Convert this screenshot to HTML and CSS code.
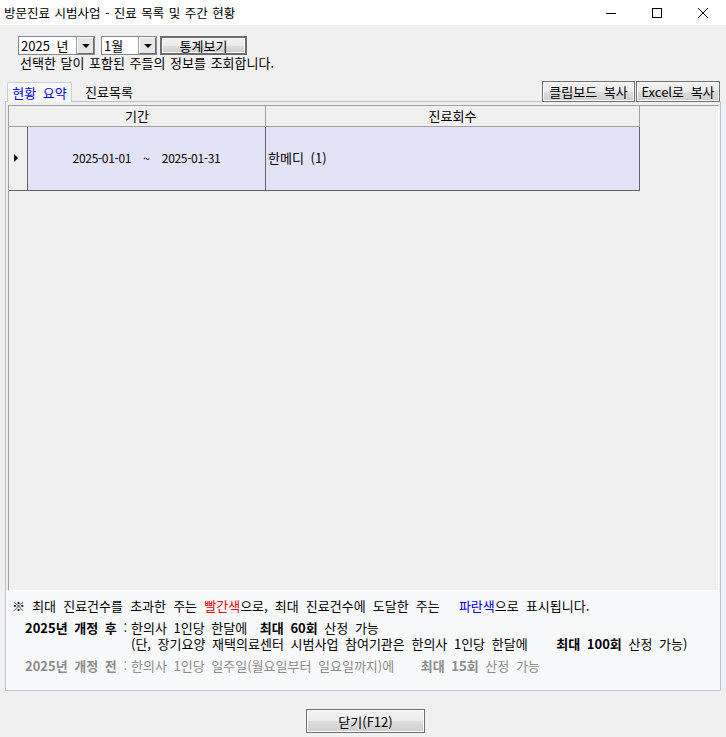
FILE: index.html
```html
<!DOCTYPE html>
<html lang="ko">
<head>
    <meta charset="UTF-8">
    <meta name="viewport" content="width=device-width, initial-scale=1.0">
    <title>방문진료 시범사업 - 진료 목록 및 주간 현황</title>
    <link rel="stylesheet" href="styles.css">
</head>
<body>

    <header class="titlebar">
        <span class="title">방문진료 시범사업 - 진료 목록 및 주간 현황</span>
        <div class="caption">
            <span class="cap-btn"><svg width="10" height="10" viewBox="0 0 10 10"><path d="M0 5.5h10" stroke="#000" stroke-width="1"/></svg></span>
            <span class="cap-btn"><svg width="10" height="10" viewBox="0 0 10 10"><rect x="0.5" y="0.5" width="9" height="9" fill="none" stroke="#000" stroke-width="1"/></svg></span>
            <span class="cap-btn"><svg width="10" height="10" viewBox="0 0 10 10"><path d="M0 0L10 10M10 0L0 10" stroke="#000" stroke-width="1"/></svg></span>
        </div>
    </header>

    <section class="toolbar">
        <div class="combo combo-year"><span class="combo-text">2025 년</span><span class="combo-arrow"></span></div>
        <div class="combo combo-month"><span class="combo-text">1월</span><span class="combo-arrow"></span></div>
        <button class="btn btn-default btn-stats">통계보기</button>
    </section>
    <p class="hint">선택한 달이 포함된 주들의 정보를 조회합니다.</p>

    <div class="tabbar">
        <div class="tabs">
            <span class="tab active">현황 요약</span>
            <span class="tab">진료목록</span>
        </div>
        <div class="actions">
            <button class="btn btn-copy">클립보드 복사</button>
            <button class="btn btn-excel">Excel로 복사</button>
        </div>
    </div>

    <section class="tabpage">
        <div class="grid">
            <div class="grid-table">
                <div class="gh gh-period">기간</div>
                <div class="gh">진료회수</div>

                <div class="rowhead"><span class="row-arrow"></span></div>
                <div class="cell cell-period">2025-01-01&nbsp;&nbsp;~&nbsp;&nbsp;2025-01-31</div>
                <div class="cell cell-count">한메디 (1)</div>
            </div>
        </div>

        <div class="notice">
            <p class="notice-head">※ 최대 진료건수를 초과한 주는 <span class="red">빨간색</span>으로, 최대 진료건수에 도달한 주는 <span class="blue">파란색</span>으로 표시됩니다.</p>
            <div class="rule">
                <span class="rule-label"><b>2025년 개정 후</b> :</span>
                <span>한의사 1인당 한달에 <b class="gap-s">최대 60회</b> 산정 가능</span>
                <span></span>
                <span>(단, 장기요양 재택의료센터 시범사업 참여기관은 한의사 1인당 한달에 <b class="gap-l">최대 100회</b> 산정 가능)</span>
            </div>
            <div class="rule rule-old">
                <span class="rule-label"><b>2025년 개정 전</b> :</span>
                <span>한의사 1인당 일주일(월요일부터 일요일까지)에 <b class="gap-m">최대 15회</b> 산정 가능</span>
            </div>
        </div>
    </section>

    <footer class="footer">
        <button class="btn btn-close">닫기(F12)</button>
    </footer>

</body>
</html>
```

FILE: styles.css
```css
body {
    margin: 0;
    width: 726px;
    height: 737px;
    overflow: hidden;
    background-color: #f0f0f0;
    font-family: "Noto Sans CJK KR", "Noto Sans", sans-serif;
    font-size: 13px;
    color: #000;
    word-spacing: 3px;
}

p {
    margin: 0;
}

/* title bar */
.titlebar {
    height: 25px;
    background-color: #fff;
    display: flex;
    align-items: center;
    justify-content: space-between;
    padding-left: 4px;
}

.title {
    line-height: 25px;
    margin-top: -1px;
    font-size: 12.5px;
    word-spacing: 1px;
}

.caption {
    display: flex;
    align-self: stretch;
}

.cap-btn {
    width: 46px;
    display: flex;
    align-items: center;
    justify-content: center;
}

/* toolbar */
.toolbar {
    display: flex;
    margin: 11px 0 0 18px;
    height: 19px;
}

.combo {
    display: flex;
    box-sizing: border-box;
    height: 19px;
    border: 1px solid #828790;
    background-color: #fff;
}

.combo-year {
    width: 77px;
}

.combo-month {
    width: 56px;
    margin-left: 6px;
}

.combo-text {
    flex: 1;
    line-height: 17px;
    padding-left: 2px;
}

.combo-arrow {
    width: 15px;
    background-color: #e6e6e6;
    border: 1px solid #fff;
    border-right-color: #6d6d6d;
    border-bottom-color: #6d6d6d;
    box-shadow: -1px 0 0 #a0a0a0;
    position: relative;
}

.combo-arrow::after {
    content: "";
    position: absolute;
    left: 4px;
    top: 6px;
    border-left: 4px solid transparent;
    border-right: 4px solid transparent;
    border-top: 4px solid #000;
}

.btn {
    font-family: inherit;
    font-size: 13px;
    word-spacing: 3px;
    color: #000;
    padding: 0;
    box-sizing: border-box;
    border: 1px solid #707070;
    background: linear-gradient(#f2f2f2 0%, #ebebeb 50%, #dddddd 51%, #cfcfcf 100%);
    box-shadow: inset 0 0 0 1px #fcfcfc;
    cursor: pointer;
}

.btn-default {
    border: 2px solid #6d6d6d;
}

.btn-stats {
    width: 87px;
    height: 19px;
    margin-left: 3px;
    line-height: 14px;
}

.hint {
    margin: 1px 0 0 20px;
    line-height: 14px;
    height: 14px;
    word-spacing: 1px;
}

/* tabs */
.tabbar {
    display: flex;
    justify-content: space-between;
    height: 20px;
    margin-top: 11px;
}

.tabs {
    display: flex;
    align-items: flex-end;
    padding-left: 7px;
}

.tab {
    width: 74px;
    height: 19px;
    line-height: 19px;
    text-align: center;
}

.tab.active {
    width: 63px;
    height: 19px;
    color: #0000ff;
    background-color: #fafafa;
    border: 1px solid #c2cfde;
    border-bottom: none;
    border-radius: 2px 2px 0 0;
    position: relative;
    z-index: 1;
    margin-bottom: -1px;
}

.actions {
    display: flex;
    margin-right: 6px;
}

.btn-copy {
    width: 93px;
    height: 21px;
}

.btn-excel {
    width: 84px;
    height: 21px;
    margin-left: 1px;
}

/* tab page */
.tabpage {
    margin: 0 5px 0 5px;
    height: 588px;
    border: 1px solid #b7c6d6;
    display: flex;
    flex-direction: column;
}

.grid {
    margin: 3px 1px 0 2px;
    height: 486px;
    box-sizing: border-box;
    border: 1px solid #a0a0a0;
    border-right-color: #fff;
    border-bottom-color: #fff;
    background-color: #f0f0f0;
}

.grid-table {
    display: grid;
    grid-template-columns: 19px 238px 374px;
    grid-template-rows: 21px 64px;
}

.gh {
    box-sizing: border-box;
    text-align: center;
    line-height: 20px;
    border-right: 1px solid #a0a0a0;
    border-bottom: 1px solid #a0a0a0;
    background-color: #f0f0f0;
}

.gh-period {
    grid-column: span 2;
}

.rowhead {
    box-sizing: border-box;
    border-right: 1px solid #646464;
    border-bottom: 1px solid #646464;
    background-color: #f0f0f0;
    position: relative;
}

.row-arrow {
    position: absolute;
    left: 5px;
    top: 27px;
    border-top: 4px solid transparent;
    border-bottom: 4px solid transparent;
    border-left: 4px solid #000;
}

.cell {
    box-sizing: border-box;
    background-color: #e3e3f8;
    border-right: 1px solid #646464;
    border-bottom: 1px solid #646464;
    line-height: 62px;
}

.cell-period {
    text-align: center;
    font-size: 12px;
    letter-spacing: -0.3px;
}

.cell-count {
    padding-left: 2px;
}

/* notice */
.notice {
    flex: 1;
    background-color: #f8f9fb;
    padding: 7px 0 0 6px;
}

.notice-head {
    line-height: 16px;
    word-spacing: 3.5px;
}

.red {
    color: #ff0000;
}

.blue {
    color: #0000ff;
    margin-left: 12px;
}

.rule {
    display: grid;
    grid-template-columns: 106px auto;
    margin: 6px 0 0 13px;
    line-height: 16px;
}

.rule-label {
    white-space: nowrap;
}

.rule-old {
    color: #8c8c8c;
}

.gap-s {
    margin-left: 6px;
}

.gap-m {
    margin-left: 20px;
}

.gap-l {
    margin-left: 22px;
}

/* footer */
.footer {
    height: 46px;
    padding-left: 306px;
}

.btn-close {
    margin-top: 18px;
    width: 119px;
    height: 24px;
}
```
